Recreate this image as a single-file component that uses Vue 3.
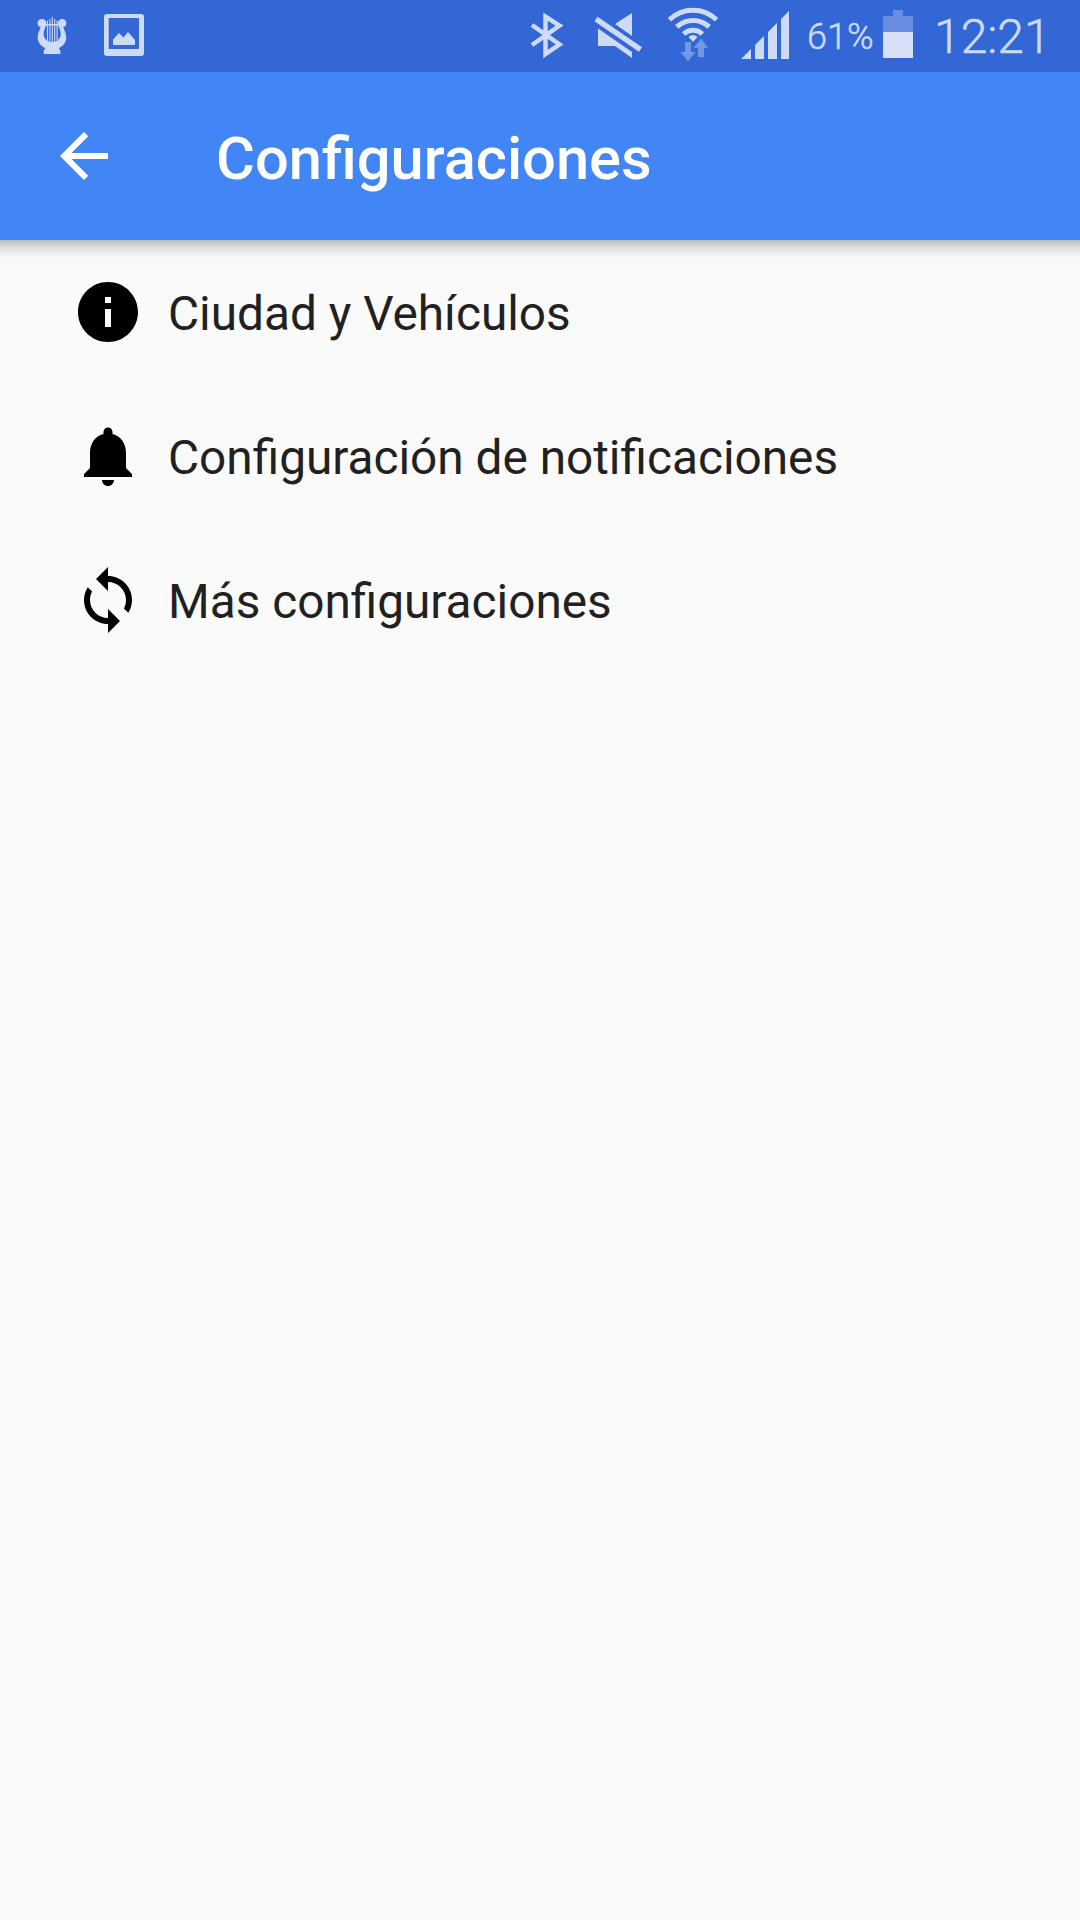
<template>
  <div class="pantalla">
    <!-- Barra de estado -->
    <div class="estado">
      <div class="grupo">
        <svg class="lira" viewBox="36 0 32 72">
          <path class="relleno" d="M42 19c2.500 0 4.400 1.800 4.400 4.200 0 3-2.700 6-2.700 10.800 0 4.700 3.700 8.200 8.500 8.200s8.500-3.500 8.500-8.200c0-4.800-2.700-7.800-2.700-10.800 0-2.400 1.900-4.200 4.200-4.200 2.400 0 4.200 1.700 4.200 4.100 0 2.100-1.200 3.600-3.200 4 1.200 3.500 3 6.500 3 10.400 0 5-3.200 8.700-7.300 10.400.2 1 .5 1.400 1.400 2V54H43.800v-4.100c.9-.6 1.200-1 1.400-2-4.100-1.700-7.500-5.400-7.500-10.400 0-3.900 1.800-6.900 3-10.400-2-.4-3.200-1.900-3.200-4 0-2.400 2-4.100 4.500-4.100z" />
          <path class="relleno" d="M44 24h16v1.500H44z" />
          <path class="cuerdas" d="M47.500 20.500v20M49.900 19v23M52.300 17v26M54.700 19v23M57.100 20.500v20" />
        </svg>
        <svg class="imagen" viewBox="104 0 40 72">
          <path class="relleno" fill-rule="evenodd" d="M107 14h34a3 3 0 0 1 3 3v36a3 3 0 0 1-3 3h-34a3 3 0 0 1-3-3V17a3 3 0 0 1 3-3zm1.700 4v31H139V18zM113 45v-5.500l6-6.500 4.500 4.500 4.500-5.500 7 8v5z" />
        </svg>
      </div>

      <div class="grupo">
        <svg class="bluetooth" viewBox="530 0 34 72">
          <path class="trazo" d="M532 25l27.500 19.500L545.500 54V16.500l14 9L532 45" />
        </svg>
        <svg class="silencio" viewBox="592 0 50 72">
          <path class="relleno" d="M632 13v23l-17-12zM598 28.500l34 23.500v6l-17-12h-17z" />
          <path class="tachado" d="M596 19l44.500 30.500" />
        </svg>
        <svg class="wifi" viewBox="668 0 50 72">
          <g class="arcos">
            <path d="M669.500 19.800a34 34 0 0 1 47 0" />
            <path d="M676.800 26.900a23.500 23.500 0 0 1 32.400 0" />
            <path d="M683.600 34a14 14 0 0 1 18.800 0" />
          </g>
          <path class="relleno" d="M688.500 37q4.500-4 9 0l-4.500 5z" />
          <path class="flechas" d="M685 42h6v10h4.500L688 61.500 680.500 52h4.500zM701 38.500l7 9.500h-4v9h-6v-9h-4.500z" />
        </svg>
        <svg class="senal" viewBox="741 0 48 72">
          <path class="relleno" d="M741 59l10-10v10zM755 59V45l9-9v23zM768 59V32l9-9v36zM781 59V19l8-8v48z" />
        </svg>
        <span class="porcentaje">61%</span>
        <svg class="bateria" viewBox="883 0 30 72">
          <path class="vacia" d="M893 10h10v6h10v16h-30V16h10z" />
          <path class="carga" d="M883 32h30v26h-30z" />
        </svg>
        <span class="hora">12:21</span>
      </div>
    </div>

    <!-- Encabezado -->
    <header class="encabezado">
      <button class="volver" aria-label="Volver">
        <svg viewBox="0 0 24 24">
          <path d="M20 11H7.830l5.590-5.590L12 4l-8 8 8 8 1.410-1.410L7.830 13H20v-2z" />
        </svg>
      </button>
      <h1>Configuraciones</h1>
    </header>

    <!-- Opciones -->
    <ul class="lista">
      <li v-for="o in opciones" :key="o.texto">
        <svg viewBox="0 0 24 24"><path :d="o.icono" /></svg>
        <span>{{ o.texto }}</span>
      </li>
    </ul>
  </div>
</template>

<script setup>
const opciones = [
  {
    texto: "Ciudad y Vehículos",
    icono: "M12 2C6.480 2 2 6.480 2 12s4.480 10 10 10 10-4.480 10-10S17.520 2 12 2zm1 15h-2v-6h2v6zm0-8h-2V7h2v2z",
  },
  {
    texto: "Configuración de notificaciones",
    icono: "M12 22c1.100 0 2-.9 2-2h-4c0 1.100.9 2 2 2zm6-6v-5c0-3.070-1.640-5.640-4.500-6.320V4c0-.83-.67-1.500-1.500-1.500s-1.500.67-1.500 1.500v.68C7.630 5.360 6 7.920 6 11v5l-2 2v1h16v-1l-2-2z",
  },
  {
    texto: "Más configuraciones",
    icono: "M12 4V1L8 5l4 4V6c3.310 0 6 2.690 6 6 0 1.010-.25 1.970-.7 2.800l1.460 1.460C19.540 15.030 20 13.570 20 12c0-4.420-3.580-8-8-8zm0 14c-3.310 0-6-2.690-6-6 0-1.010.25-1.970.7-2.800L5.240 7.740C4.460 8.970 4 10.430 4 12c0 4.420 3.580 8 8 8v3l4-4-4-4v3z",
  },
]
</script>

<style>
body { background: #fafafa; }
</style>

<style scoped>
.pantalla {
  min-height: 1920px;
  background: #fafafa;
  color: #212121;
  font-family: Roboto, sans-serif;
}

.estado {
  display: flex;
  justify-content: space-between;
  height: 72px;
  padding: 0 32px 0 36px;
  box-sizing: border-box;
  background: #3367d6;
  color: #cddbf6;
}
.grupo { display: flex; align-items: center; }
.estado svg { height: 72px; flex: none; }
.relleno { fill: #cddbf6; }
.lira { width: 32px; margin-right: 36px; }
.cuerdas { fill: none; stroke: #cddbf6; stroke-width: 1.1; }
.imagen { width: 40px; }
.bluetooth { width: 34px; margin-right: 28px; }
.trazo { fill: none; stroke: #cddbf6; stroke-width: 4.5; }
.silencio { width: 50px; margin-right: 26px; }
.tachado { stroke: #cddbf6; stroke-width: 5.5; }
.wifi { width: 50px; margin-right: 23px; }
.arcos { fill: none; stroke: #cddbf6; stroke-width: 5; }
.flechas { fill: #7398e3; }
.senal { width: 48px; margin-right: 18px; }
.porcentaje,
.hora {
  padding-top: 2px;
  font-weight: 300;
  line-height: 70px;
  -webkit-text-stroke: 0.5px #cddbf6;
}
.porcentaje { width: 66px; margin-right: 10px; font-size: 36px; }
.bateria { width: 30px; }
.vacia { fill: #668de0; }
.carga { fill: #d6e0f7; }
.hora { width: 114px; margin-left: 21px; font-size: 48px; }

.encabezado {
  position: relative;
  display: flex;
  align-items: center;
  height: 168px;
  padding: 0 48px;
  box-sizing: border-box;
  background: #4285f4;
  color: #fff;
}
/* Sombra bajo el encabezado */
.encabezado::after {
  content: "";
  position: absolute;
  top: 100%;
  left: 0;
  right: 0;
  height: 18px;
  background: linear-gradient(rgba(0, 0, 0, 0.25), rgba(0, 0, 0, 0.09) 50%, rgba(0, 0, 0, 0));
}
.volver { width: 72px; height: 72px; margin-right: 96px; padding: 0; border: none; background: none; }
.volver svg { display: block; width: 72px; height: 72px; fill: #fff; }
h1 { margin: 6px 0 0; font-size: 59.6px; font-weight: 500; line-height: 72px; }

.lista { margin: 0; padding: 0 72px; list-style: none; }
.lista li { display: flex; align-items: center; height: 144px; font-size: 47.75px; line-height: 72px; }
.lista svg { width: 72px; height: 72px; margin-right: 24px; fill: #000; }
.lista span { padding-top: 4px; }
</style>
